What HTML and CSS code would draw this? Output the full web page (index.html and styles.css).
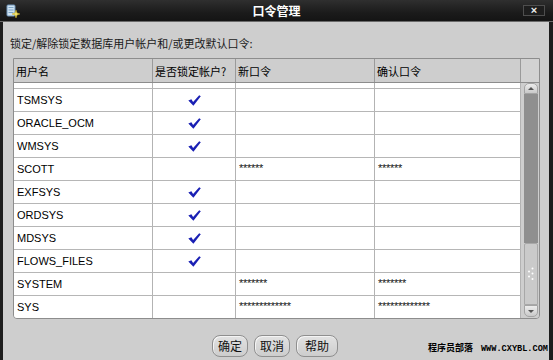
FILE: index.html
```html
<!DOCTYPE html>
<html lang="zh">
<head>
<meta charset="utf-8">
<title>口令管理</title>
<link rel="stylesheet" href="styles.css">
</head>
<body>
<div class="window">
  <div class="titlebar">
    <div class="tb-left">
      <svg class="app-icon" width="14" height="14" viewBox="0 0 14 14">
        <rect x="1" y="1" width="8" height="11" rx="1" fill="#cfe3f2" stroke="#6f94b8" stroke-width="1"/>
        <rect x="2.5" y="3" width="5" height="1" fill="#7ea6c9"/>
        <rect x="2.5" y="5.5" width="5" height="1" fill="#7ea6c9"/>
        <rect x="2.5" y="8" width="5" height="1" fill="#7ea6c9"/>
        <path d="M10 6 L11 9 L14 10 L11 11 L10 14 L9 11 L6 10 L9 9 Z" fill="#f4e36a" stroke="#c2a91e" stroke-width="0.5"/>
      </svg>
    </div>
    <div class="title">口令管理</div>
    <div class="tb-right"><div class="close">×</div></div>
  </div>
  <div class="body">
    <div class="label">锁定/解除锁定数据库用户帐户和/或更改默认口令:</div>
    <div class="tablebox">
      <div class="grid">
        <div class="row head">
          <div class="c">用户名</div><div class="c">是否锁定帐户?</div><div class="c">新口令</div><div class="c">确认口令</div>
        </div>
        <div class="row partial">
          <div class="c"></div><div class="c"></div><div class="c"></div><div class="c"></div>
        </div>
        <div class="row">
          <div class="c">TSMSYS</div><div class="c chk"><svg class="tick" viewBox="0 0 13 11"><path d="M0.3 5.6 L3.4 4.2 L5.1 6.9 L11.2 0.2 L12.8 1.3 L5.4 10.8 Z"/></svg></div><div class="c"></div><div class="c"></div>
        </div>
        <div class="row">
          <div class="c">ORACLE_OCM</div><div class="c chk"><svg class="tick" viewBox="0 0 13 11"><path d="M0.3 5.6 L3.4 4.2 L5.1 6.9 L11.2 0.2 L12.8 1.3 L5.4 10.8 Z"/></svg></div><div class="c"></div><div class="c"></div>
        </div>
        <div class="row">
          <div class="c">WMSYS</div><div class="c chk"><svg class="tick" viewBox="0 0 13 11"><path d="M0.3 5.6 L3.4 4.2 L5.1 6.9 L11.2 0.2 L12.8 1.3 L5.4 10.8 Z"/></svg></div><div class="c"></div><div class="c"></div>
        </div>
        <div class="row">
          <div class="c">SCOTT</div><div class="c chk"></div><div class="c pw">******</div><div class="c pw">******</div>
        </div>
        <div class="row">
          <div class="c">EXFSYS</div><div class="c chk"><svg class="tick" viewBox="0 0 13 11"><path d="M0.3 5.6 L3.4 4.2 L5.1 6.9 L11.2 0.2 L12.8 1.3 L5.4 10.8 Z"/></svg></div><div class="c"></div><div class="c"></div>
        </div>
        <div class="row">
          <div class="c">ORDSYS</div><div class="c chk"><svg class="tick" viewBox="0 0 13 11"><path d="M0.3 5.6 L3.4 4.2 L5.1 6.9 L11.2 0.2 L12.8 1.3 L5.4 10.8 Z"/></svg></div><div class="c"></div><div class="c"></div>
        </div>
        <div class="row">
          <div class="c">MDSYS</div><div class="c chk"><svg class="tick" viewBox="0 0 13 11"><path d="M0.3 5.6 L3.4 4.2 L5.1 6.9 L11.2 0.2 L12.8 1.3 L5.4 10.8 Z"/></svg></div><div class="c"></div><div class="c"></div>
        </div>
        <div class="row">
          <div class="c">FLOWS_FILES</div><div class="c chk"><svg class="tick" viewBox="0 0 13 11"><path d="M0.3 5.6 L3.4 4.2 L5.1 6.9 L11.2 0.2 L12.8 1.3 L5.4 10.8 Z"/></svg></div><div class="c"></div><div class="c"></div>
        </div>
        <div class="row">
          <div class="c">SYSTEM</div><div class="c chk"></div><div class="c pw">*******</div><div class="c pw">*******</div>
        </div>
        <div class="row last">
          <div class="c">SYS</div><div class="c chk"></div><div class="c pw">*************</div><div class="c pw">*************</div>
        </div>
      </div>
      <div class="vscroll">
        <div class="vs-head"></div>
        <div class="vs-track">
          <div class="vs-up"><span class="arr-up"></span></div>
          <div class="vs-space"></div>
          <div class="vs-thumb">
            <svg width="8" height="14" viewBox="0 0 8 14">
              <circle cx="5.5" cy="1.5" r="1" fill="#fff"/><circle cx="2" cy="4.5" r="1" fill="#fff"/>
              <circle cx="5.5" cy="6.5" r="1" fill="#fff"/><circle cx="2" cy="9.5" r="1" fill="#fff"/>
              <circle cx="5.5" cy="12" r="1" fill="#fff"/>
            </svg>
          </div>
          <div class="vs-down"><span class="arr-down"></span></div>
        </div>
      </div>
    </div>
    <div class="buttons">
      <div class="btn">确定</div>
      <div class="btn">取消</div>
      <div class="btn wide">帮助</div>
    </div>
  </div>
  <div class="watermark"><span class="wm-cn">程序员部落</span><span class="wm-en">WWW.CXYBL.COM</span></div>
</div>
</body>
</html>
```
FILE: styles.css
```css
* { box-sizing: border-box; }
html, body { margin: 0; padding: 0; }
body {
  font-family: "Liberation Sans", "Noto Sans CJK SC", sans-serif;
  font-size: 11px;
  color: #000;
  background: #cecece;
}
.window {
  width: 553px;
  height: 360px;
  position: relative;
  overflow: hidden;
  display: flex;
  flex-direction: column;
  background: #cecece;
}
.titlebar {
  height: 22px;
  flex: none;
  display: grid;
  grid-template-columns: 1fr auto 1fr;
  align-items: center;
  background: linear-gradient(#2f2f2f, #1b1b1b 60%, #141414);
  border-bottom: 1px solid #6a6a6a;
}
.tb-left { padding-left: 6px; display: flex; align-items: center; }
.app-icon { display: block; }
.title {
  color: #fff;
  font-family: "Noto Sans CJK SC", sans-serif;
  font-weight: bold;
  font-size: 12px;
  line-height: 14px;
}
.tb-right { display: flex; justify-content: flex-end; padding-right: 8px; }
.close {
  width: 22px;
  height: 11px;
  border: 1px solid #4e4e4e;
  background: #1e1e1e;
  color: #eee;
  font-size: 11px;
  line-height: 9px;
  font-weight: bold;
  text-align: center;
}
.body {
  flex: 1;
  border-left: 3px solid #1d1d1d;
  border-right: 4px solid #1d1d1d;
  padding: 14px 9px 0 7px;
  display: flex;
  flex-direction: column;
}
.label {
  font-family: "Noto Sans CJK SC", sans-serif;
  font-size: 11px;
  line-height: 14px;
  color: #1a1a1a;
}
.tablebox {
  margin: 8px 0 0 3px;
  width: 527px;
  border: 1px solid #8d8d8d;
  border-radius: 0 0 4px 4px;
  display: flex;
  overflow: hidden;
}
.grid { width: 507px; background: #fff; }
.row {
  display: grid;
  grid-template-columns: 139px 83px 139px 146px;
  height: 23px;
  border-bottom: 1px solid #b6b6b6;
}
.row.last { border-bottom: none; height: 22px; }
.c {
  border-right: 1px solid #b3b3b3;
  padding-left: 3px;
  display: flex;
  align-items: center;
  white-space: nowrap;
  overflow: hidden;
}
.row.head {
  height: 24px;
  background: #cecece;
  border-bottom: 1px solid #8c8c8c;
}
.row.head .c {
  border-right: 1px solid #9a9a9a;
  font-family: "Noto Sans CJK SC", sans-serif;
  padding-left: 2px;
  padding-top: 1px;
}
.row.partial { height: 6px; }
.chk { justify-content: center; padding-left: 0; }
.tick { width: 13px; height: 11px; display: block; fill: #1a20b4; margin-top: 1px; }
.pw { align-items: flex-start; padding-top: 4px; font-size: 11px; letter-spacing: -0.3px; color: #111; }
.vscroll {
  width: 18px;
  display: flex;
  flex-direction: column;
  background: #cecece;
}
.vs-head {
  height: 24px;
  flex: none;
  border-bottom: 1px solid #8c8c8c;
  background: #d2d2d2;
}
.vs-track {
  flex: 1;
  display: flex;
  flex-direction: column;
  padding: 0 1px 1px 3px;
}
.vs-up, .vs-down {
  height: 11px;
  flex: none;
  background: linear-gradient(#ececec, #c9c9c9);
  border: 1px solid #a4a4a4;
  display: flex;
  align-items: center;
  justify-content: center;
}
.vs-up { border-radius: 5px 5px 0 0; }
.vs-down { height: 12px; border-radius: 0 0 5px 5px; }
.arr-up {
  width: 0; height: 0;
  border-left: 3px solid transparent;
  border-right: 3px solid transparent;
  border-bottom: 3px solid #555;
}
.arr-down {
  width: 0; height: 0;
  border-left: 3px solid transparent;
  border-right: 3px solid transparent;
  border-top: 3px solid #555;
}
.vs-space { flex: 1; background: #8f8f8f; }
.vs-thumb {
  height: 62px;
  flex: none;
  background: #cacaca;
  border: 1px solid #a8a8a8;
  border-radius: 2px 2px 0 0;
  display: flex;
  align-items: center;
  justify-content: center;
}
.buttons {
  margin-top: 16px;
  display: flex;
  justify-content: center;
  gap: 6px;
}
.btn {
  height: 22px;
  padding: 0 5px;
  border: 1px solid #8f8f8f;
  border-radius: 8px;
  background: linear-gradient(#e2e2e2, #cdcdcd);
  box-shadow: inset 1px 1px 0 #f4f4f4;
  font-family: "Noto Sans CJK SC", sans-serif;
  font-size: 12px;
  line-height: 20px;
  color: #111;
}
.btn.wide { padding: 0 8px; }
.watermark {
  position: absolute;
  right: 5px;
  bottom: 6px;
  display: flex;
  align-items: baseline;
  gap: 8px;
  font-weight: bold;
  line-height: 10px;
  color: #000;
}
.wm-cn { font-family: "Noto Sans CJK SC", sans-serif; font-size: 9px; }
.wm-en { font-family: "Liberation Mono", monospace; font-size: 8.6px; }
```
